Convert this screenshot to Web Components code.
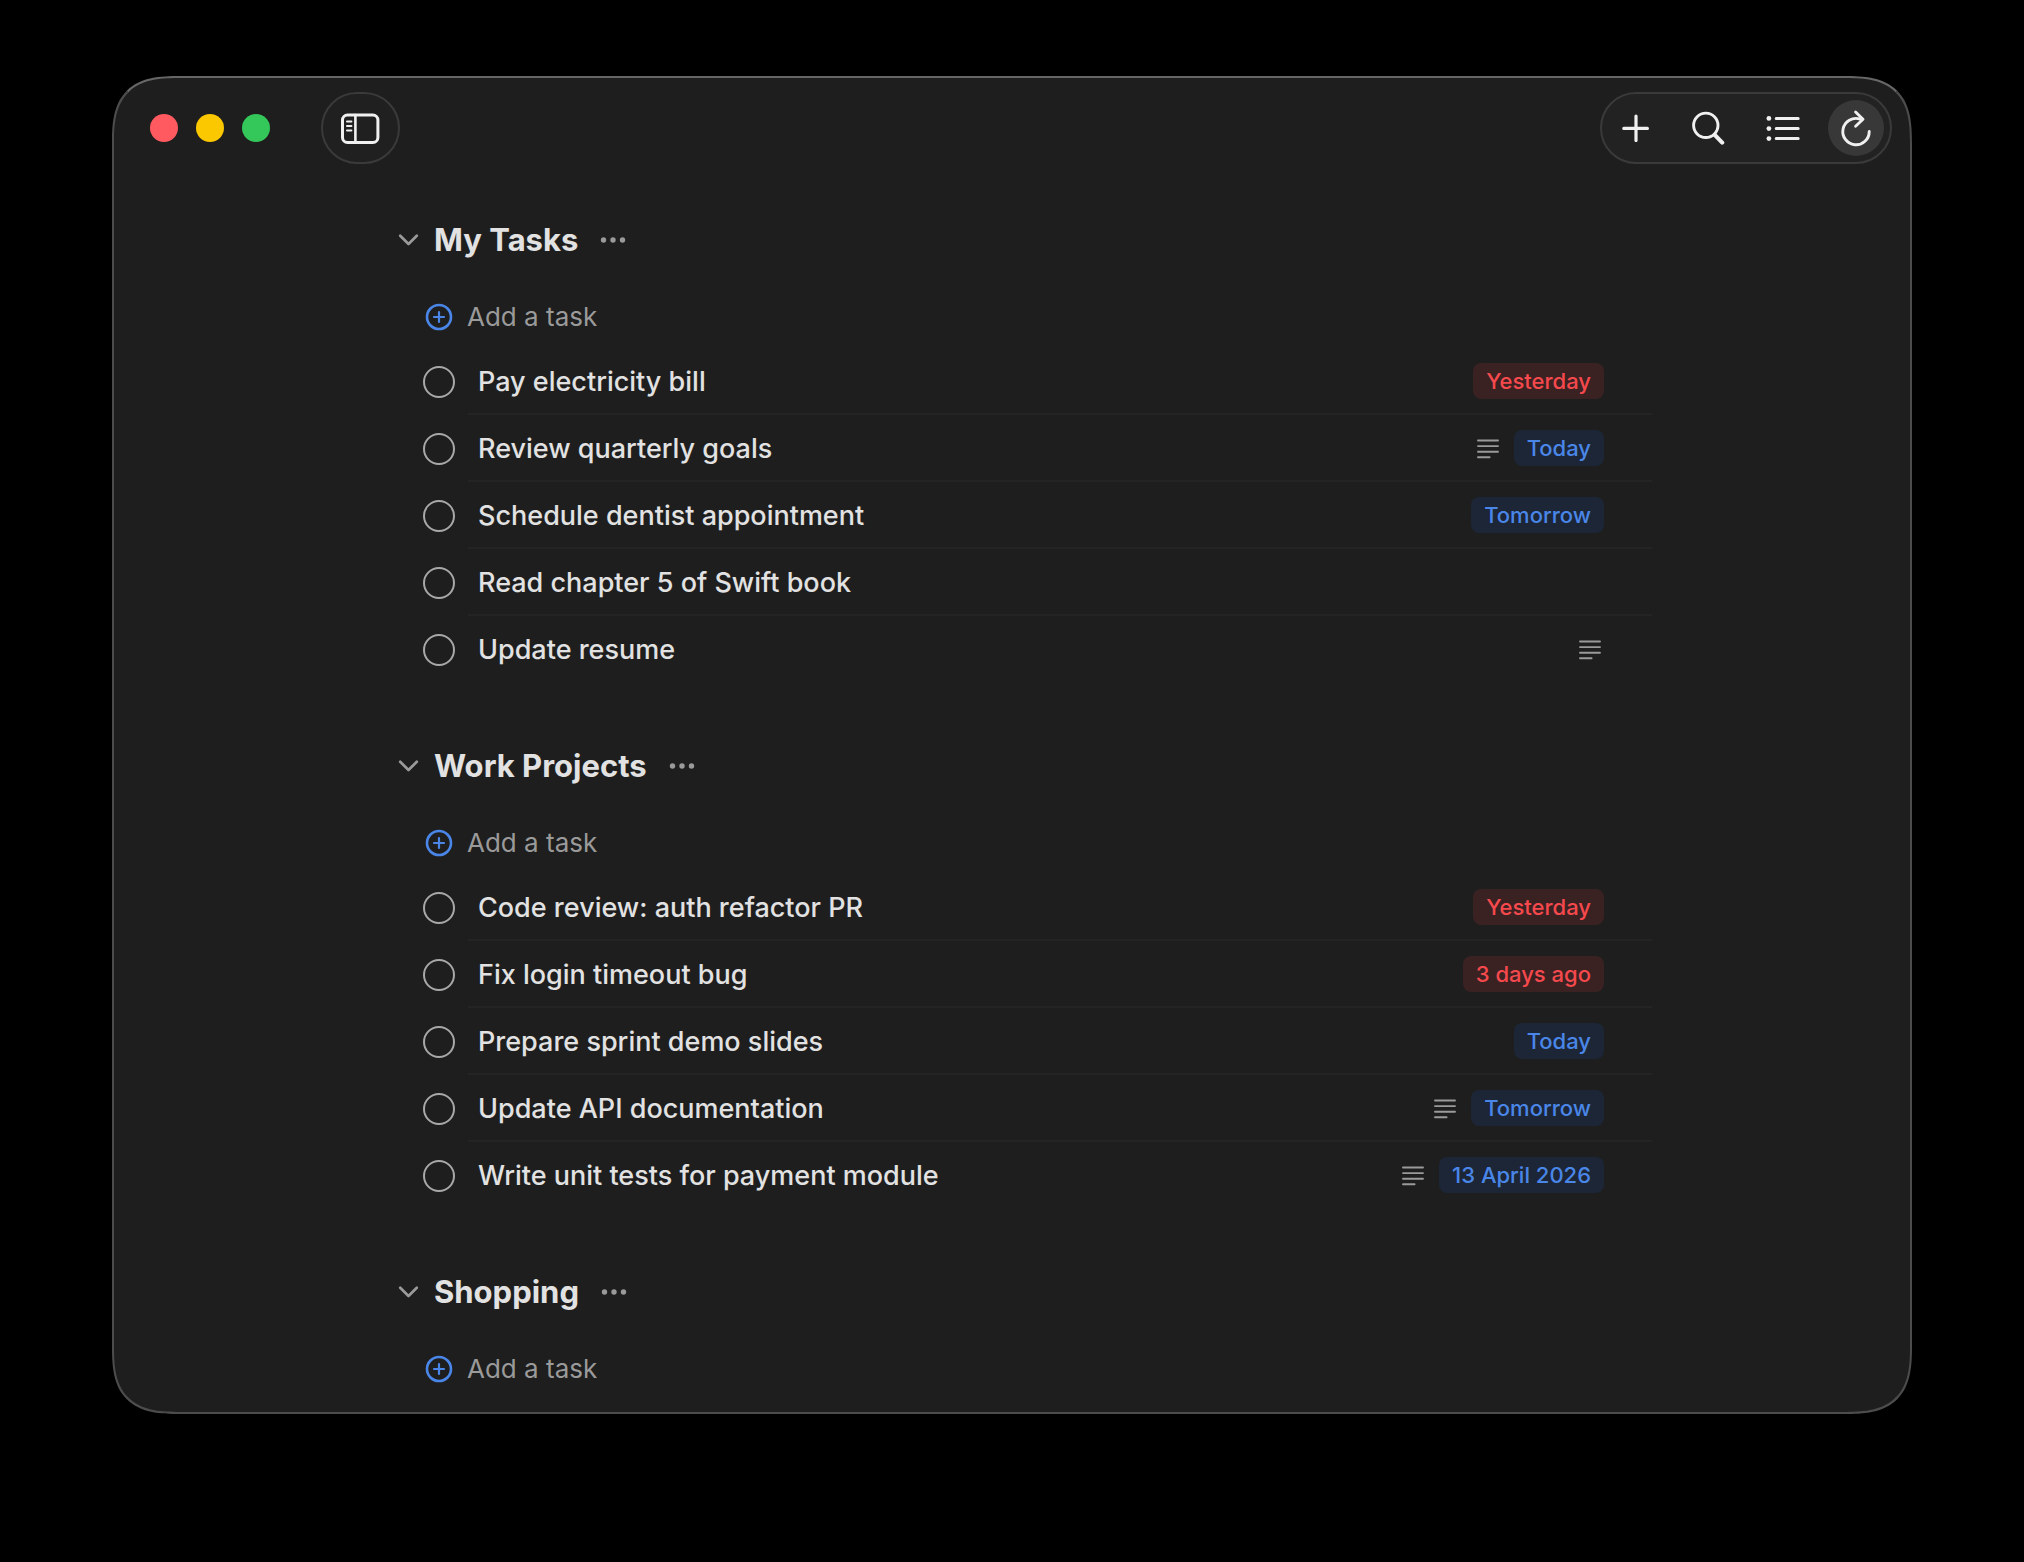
<!DOCTYPE html>
<html lang="en">
<head>
<meta charset="utf-8">
<meta name="viewport" content="width=device-width, initial-scale=1">
<title>Tasks</title>
<style>
  html { background: #000; }
  body {
    margin: 0;
    box-sizing: border-box;
    min-height: 100vh;
    padding: 76px 112px 148px;
    display: flex;
    background: #000;
    color: #e2e2e2;
    font-family: Inter, "Liberation Sans", sans-serif;
    --surface: #1e1e1e;
    --muted: #9a9a9a;
    --accent: #4a86e8;
    --red: #f5494d;
  }
  app-window { flex: 1; }
</style>
</head>
<body>
<app-window>
  <tool-bar slot="toolbar"></tool-bar>
  <task-section heading="My Tasks">
    <task-row label="Pay electricity bill"><date-badge tone="late">Yesterday</date-badge></task-row>
    <task-row label="Review quarterly goals"><note-icon></note-icon><date-badge>Today</date-badge></task-row>
    <task-row label="Schedule dentist appointment"><date-badge>Tomorrow</date-badge></task-row>
    <task-row label="Read chapter 5 of Swift book"></task-row>
    <task-row label="Update resume"><note-icon></note-icon></task-row>
  </task-section>
  <task-section heading="Work Projects">
    <task-row label="Code review: auth refactor PR"><date-badge tone="late">Yesterday</date-badge></task-row>
    <task-row label="Fix login timeout bug"><date-badge tone="late">3 days ago</date-badge></task-row>
    <task-row label="Prepare sprint demo slides"><date-badge>Today</date-badge></task-row>
    <task-row label="Update API documentation"><note-icon></note-icon><date-badge>Tomorrow</date-badge></task-row>
    <task-row label="Write unit tests for payment module"><note-icon></note-icon><date-badge>13 April 2026</date-badge></task-row>
  </task-section>
  <task-section heading="Shopping"></task-section>
</app-window>

<script>
const define = (name, markup, setup) => {
  const template = document.createElement('template');
  template.innerHTML = markup;
  customElements.define(name, class extends HTMLElement {
    constructor() {
      super();
      this.attachShadow({ mode: 'open' }).append(template.content.cloneNode(true));
    }
    connectedCallback() { if (setup) setup(this, this.shadowRoot); }
  });
};

define('app-window', `
  <style>
    :host {
      display: flex; flex-direction: column; box-sizing: border-box;
      background: var(--surface);
      border: 2px solid #4c4c4c; border-top-color: #666;
      border-radius: 54px; overflow: hidden;
    }
    @supports (corner-shape: superellipse(1.5)) {
      :host { border-radius: 68px; corner-shape: superellipse(1.5); }
    }
    main {
      box-sizing: border-box; width: 100%; max-width: 1280px;
      margin: 0 auto; padding: 56px 0 9px;
      display: flex; flex-direction: column; gap: 63px;
    }
  </style>
  <slot name="toolbar"></slot>
  <main><slot></slot></main>`);

define('tool-bar', `
  <style>
    :host { display: flex; align-items: center; justify-content: space-between; padding: 14px 18px 0 36px; }
    .start, .lights { display: flex; align-items: center; }
    .start { gap: 51px; }
    .lights { gap: 18px; }
    button { display: grid; place-items: center; margin: 0; padding: 0; border: 0; background: none; color: #f0f0f0; }
    .light { width: 28px; height: 28px; border-radius: 50%; }
    .close { background: #ff5a5f; }
    .min { background: #fbc800; }
    .zoom { background: #34c759; }
    .side, .group { box-sizing: border-box; height: 72px; border: 2px solid #3a3a3a; border-radius: 36px; background: #222; }
    .side { width: 79px; background: #202020; }
    .group { display: flex; align-items: center; justify-content: space-between; width: 292px; padding: 0 6px 0 5px; }
    .group button { width: 56px; height: 56px; border-radius: 50%; }
    .group .on { background: #383838; }
    svg { display: block; fill: none; stroke: currentColor; stroke-linecap: round; stroke-linejoin: round; }
  </style>
  <div class="start">
    <div class="lights">
      <button class="light close" aria-label="Close"></button>
      <button class="light min" aria-label="Minimise"></button>
      <button class="light zoom" aria-label="Zoom"></button>
    </div>
    <button class="side" aria-label="Toggle sidebar">
      <svg width="40" height="32" viewBox="1 0 40 32" stroke-width="3">
        <rect x="2.5" y="3" width="35.4" height="27.4" rx="5"/>
        <path d="M15.4 3v27" stroke-width="2.6"/>
        <path d="M7 9.6h4.4M7 14h4.4M7 18.4h4.4" stroke-width="2"/>
      </svg>
    </button>
  </div>
  <div class="group">
    <button aria-label="Add">
      <svg width="28" height="28" viewBox="0 0 28 28" stroke-width="3.2"><path d="M15 2v24.6M2.8 14.4h23.6"/></svg>
    </button>
    <button aria-label="Search">
      <svg width="34" height="34" viewBox="1 0 34 34" stroke-width="2.9"><circle cx="14.8" cy="14.3" r="12.2"/><path d="M23.4 23.4l1 1"/><path d="M24.2 24.4l7 7.2" stroke-width="4.2"/></svg>
    </button>
    <button aria-label="List view">
      <svg width="36" height="26" viewBox="-2 0 36 26" stroke-width="3"><path d="M10.2 3.4h22M10.2 13.6h22M10.2 23.6h22"/><g fill="currentColor" stroke="none"><circle cx="2.9" cy="3.4" r="2.4"/><circle cx="2.9" cy="13.6" r="2.4"/><circle cx="2.9" cy="23.6" r="2.4"/></g></svg>
    </button>
    <button class="on" aria-label="Refresh">
      <svg width="32" height="38" viewBox="0 0 32 38" stroke-width="2.9"><path d="M20 10A13.2 13.2 0 1 0 29.2 22.4"/><path d="M15.6 3l7.4 7.2-7.4 7"/></svg>
    </button>
  </div>`);

define('task-section', `
  <style>
    :host { display: block; }
    header { display: flex; align-items: center; height: 40px; padding-left: 26px; }
    button { display: flex; align-items: center; margin: 0; padding: 0; border: 0; background: none; font: inherit; color: var(--muted); }
    h2 { margin: 0 22px 0 15px; font-size: 31px; line-height: 40px; font-weight: 700; }
    .add { gap: 14px; height: 62px; margin-top: 26px; padding-left: 53px; font-size: 26px; line-height: 32px; }
    .add svg { color: var(--accent); }
    svg { display: block; fill: none; stroke: currentColor; stroke-linecap: round; stroke-linejoin: round; }
  </style>
  <header>
    <button aria-label="Collapse list" aria-expanded="true">
      <svg width="21" height="14" viewBox="0 0 21 14" stroke-width="2.7"><path d="M2.2 2.8l8.3 8.2 8.3-8.2"/></svg>
    </button>
    <h2></h2>
    <button aria-label="List options">
      <svg width="26" height="6" viewBox="0 0 26 6"><g fill="currentColor" stroke="none"><circle cx="3.5" cy="3" r="2.7"/><circle cx="13" cy="3" r="2.7"/><circle cx="22.5" cy="3" r="2.7"/></g></svg>
    </button>
  </header>
  <button class="add">
    <svg width="28" height="28" viewBox="0 0 28 28" stroke-width="2.6"><circle cx="14" cy="14" r="12"/><path d="M14 9v10M9 14h10" stroke-width="2.2"/></svg>
    <span>Add a task</span>
  </button>
  <slot></slot>`,
  (host, root) => { root.querySelector('h2').textContent = host.getAttribute('heading'); });

define('task-row', `
  <style>
    :host { display: block; padding-left: 51px; }
    .row { position: relative; display: flex; align-items: center; box-sizing: border-box; height: 67px; padding-right: 48px; gap: 12px; }
    :host(:not(:last-child)) .row::after { content: ""; position: absolute; left: 45px; right: 0; bottom: 0; height: 2px; background: #242424; }
    label { flex: 1; display: flex; align-items: center; gap: 23px; font-size: 27px; line-height: 36px; font-weight: 500; }
    input { appearance: none; flex: none; box-sizing: border-box; width: 32px; height: 32px; margin: 0; border: 2px solid #a8a8a8; border-radius: 50%; }
  </style>
  <div class="row">
    <label><input type="checkbox"><span></span></label>
    <slot></slot>
  </div>`,
  (host, root) => { root.querySelector('span').textContent = host.getAttribute('label'); });

define('date-badge', `
  <style>
    :host { display: block; margin-bottom: 2px; padding: 4px 13px; border-radius: 8px; background: #1c2636; color: var(--accent); font-size: 22px; line-height: 28px; font-weight: 500; }
    :host([tone="late"]) { background: #3a2122; color: var(--red); }
  </style>
  <slot></slot>`);

define('note-icon', `
  <style>
    :host { display: block; color: var(--muted); }
    svg { display: block; }
  </style>
  <svg width="26" height="22" viewBox="0 0 26 22" fill="none" stroke="currentColor" stroke-width="1.9" stroke-linecap="round"><path d="M2 2.5h20M2 8.1h20M2 13.7h20M2 19.3h11.6"/></svg>`);
</script>
</body>
</html>
